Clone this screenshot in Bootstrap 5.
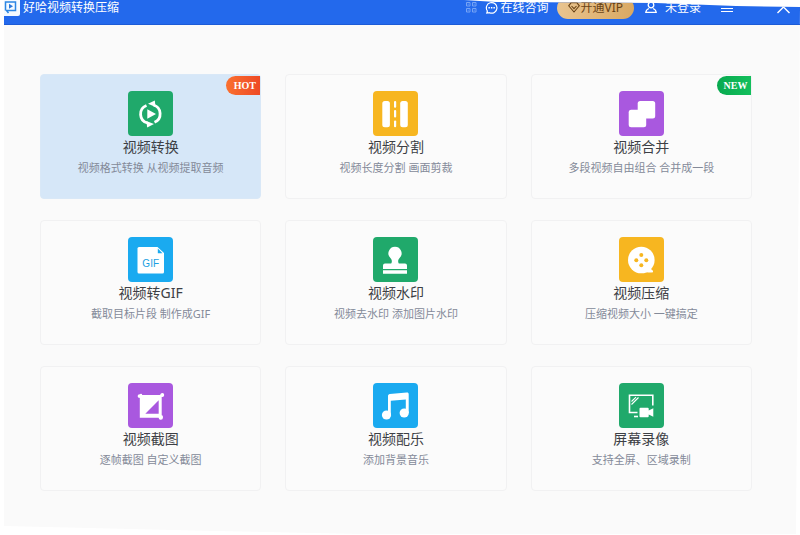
<!DOCTYPE html>
<html lang="zh-CN">
<head>
<meta charset="utf-8">
<meta name="viewport" content="width=device-width, initial-scale=1">
<title>好哈视频转换压缩</title>
<link href="https://cdn.jsdelivr.net/npm/bootstrap@5.3.0/dist/css/bootstrap.min.css" rel="stylesheet">
<style>
  body { font-family: "Noto Sans", "Noto Sans CJK SC", sans-serif; background: #fff; }
  /* The window has slightly uneven outer edges */
  .app-window {
    background: #fafafa;
    clip-path: polygon(4px 0, 58% 0, 62% 2px, 82% 3px, 92% 6px, 100% 7px, calc(100% - 4px) calc(100% - 1px), 45% calc(100% - 1px), 27% calc(100% - 4px), 4px calc(100% - 9px));
  }
  .title-bar { height: 25px; padding: 0 10px 9px 4px; background: #2369ec; border-bottom: 1px solid #1c5bd6; color: #fff; font-size: 12px; line-height: 16px; }
  .title-bar button { border: 0; padding: 0; background: none; color: inherit; line-height: 16px; font-size: 12px; white-space: nowrap; }
  .title-bar svg { flex: none; }
  .title-bar .vip-btn { height: 22px; padding: 0 11px; border-radius: 11px; background: linear-gradient(100deg, #e9c591, #d9a862); color: #6b4416; margin: 0 11px 0 9px; }
  .app-name { font-size: 12px; line-height: 16px; margin-left: 3px; }
  .chat-icon { margin-right: 2px; }
  .menu-btn { margin: 0 44px 0 20px; }
  .feature-area { padding: 49px 48px 40px 40px; }
  .feature-area .row { --bs-gutter-x: 24px; --bs-gutter-y: 21px; }
  .feature { min-height: 125px; padding: 16px 8px; border: 1px solid #f1f1f2; border-radius: 4px; background: #fbfbfb; }
  .feature.active { background: #d6e7f8; border-color: #d9e8f7; }
  .feature-title { font-size: 14px; line-height: 20px; color: #3d3f45; margin-top: 1px; }
  .feature-note { font-size: 11px; line-height: 16px; color: #848a99; margin-top: 3px; }
  .ribbon { top: 1px; right: 0; width: 34px; height: 19px; padding-left: 3px; border-radius: 10px 0 0 10px; font: bold 10px/20px "Liberation Serif", serif; color: #fff; }
  .ribbon-hot { background: linear-gradient(90deg, #fa7030, #ee4a25); }
  .ribbon-new { background: linear-gradient(90deg, #08a94f, #13bf5c); }
</style>
<script src="https://cdn.jsdelivr.net/npm/bootstrap@5.3.0/dist/js/bootstrap.bundle.min.js"></script>
</head>
<body>
<div class="app-window min-vh-100">
  <header class="title-bar d-flex align-items-center">
    <svg width="16" height="18" viewBox="0 0 16 18" aria-hidden="true"><path d="M0 0h16v15a2 2 0 0 1-2 2H0z" fill="#f4faff"/><path d="M1.500 9V3h7M4 3h7.500v8.500H4.500M1.500 7v4.500M4.500 14l-2-2.500h3M11.500 11.500H8" fill="none" stroke="#2b86e4" stroke-width="1.500"/><path d="M5 4.800v5l4-2.500z" fill="#2878dd"/></svg>
    <h1 class="app-name fw-normal mb-0">好哈视频转换压缩</h1>
    <div class="d-flex align-items-center ms-auto">
      <button type="button" class="d-flex me-2" aria-label="应用"><svg width="11" height="11" viewBox="0 0 11 11" fill="none" stroke="#77a4f5"><path d="M.5.500h3.500v3.500H.5zM6.500.500H10v3.500H6.500zM.5 6.500h3.500V10H.5zM6.500 6.500H10V10H6.500z"/><path d="M1.700 2.200h1M7.700 2.200h1M1.700 8.200h1M7.700 8.200h1"/></svg></button>
      <button type="button" class="d-flex align-items-center"><svg class="chat-icon" width="13" height="13" viewBox="0 0 13 13"><path d="M1.800 12l.6-2A5.300 5.300 0 1 1 4.500 11.700z" fill="none" stroke="#fff" stroke-width="1.200"/><path d="M3.400 6.700h1.500M5.900 6.700h1.500M8.400 6.700h1.500" stroke="#fff" stroke-width="1.500"/></svg>在线咨询</button>
      <button type="button" class="vip-btn d-flex align-items-center"><svg width="12" height="11" viewBox="0 0 12 11" fill="none" stroke="#6b4416" stroke-width="1.100"><path d="M3 .8h6l2.300 3L6 10 .7 3.800zM3.500 4L6 6.700 8.500 4"/></svg>开通VIP</button>
      <button type="button" class="d-flex align-items-center"><svg class="me-2" width="12" height="13" viewBox="0 0 12 13" fill="none" stroke="#fff" stroke-width="1.300"><circle cx="6" cy="4" r="2.800"/><path d="M4 7.500C2 8.300 1 9.500.8 11.300h10.400C11 9.500 10 8.300 8 7.500"/></svg>未登录</button>
      <button type="button" class="menu-btn d-flex" aria-label="菜单"><svg width="12" height="12" viewBox="0 0 12 12" stroke="#fff" stroke-width="1.200"><path d="M0 2.500h12M0 6.500h12M0 9.500h12"/></svg></button>
      <button type="button" class="d-flex" aria-label="关闭"><svg width="13" height="13" viewBox="0 0 13 13" stroke="#fff" stroke-width="1.400"><path d="M.5 0l12 12M12.500 0l-12 12"/></svg></button>
    </div>
  </header>

  <main class="feature-area">
    <div class="row row-cols-3">
      <div class="col"><a href="#" class="feature active card h-100 align-items-center text-center text-decoration-none">
        <span class="ribbon ribbon-hot position-absolute">HOT</span>
        <svg width="45" height="45" viewBox="0 0 45 45"><rect width="45" height="45" rx="4" fill="#20a96b"/><g fill="none" stroke="#fff" stroke-width="2.800"><path d="M18.500 14.500A9.200 9.200 0 0 0 19.500 32"/><path d="M26.500 31.300A9.200 9.200 0 0 0 25.500 14"/></g><path d="M19.300 18.300v9.400l8.700-4.700zM20 12.800l6.800-3.300.8 6.400zM26 33l-6.800 3.500-.9-6.400z" fill="#fff"/></svg>
        <span class="feature-title">视频转换</span><span class="feature-note">视频格式转换 从视频提取音频</span></a></div>

      <div class="col"><a href="#" class="feature card h-100 align-items-center text-center text-decoration-none">
        <svg width="45" height="45" viewBox="0 0 45 45"><rect width="45" height="45" rx="4" fill="#f7b620"/><g fill="#fff"><rect x="9.300" y="10" width="7.600" height="26.300" rx="2.500"/><rect x="27.200" y="10" width="7.600" height="26.300" rx="2.500"/><rect x="21" y="10" width="2.200" height="6.700" rx="1"/><rect x="21" y="19" width="2.200" height="7.500" rx="1"/><rect x="21" y="29.500" width="2.200" height="6.800" rx="1"/></g></svg>
        <span class="feature-title">视频分割</span><span class="feature-note">视频长度分割 画面剪裁</span></a></div>

      <div class="col"><a href="#" class="feature card h-100 align-items-center text-center text-decoration-none">
        <span class="ribbon ribbon-new position-absolute">NEW</span>
        <svg width="45" height="45" viewBox="0 0 45 45"><rect width="45" height="45" rx="4" fill="#a958df"/><g fill="#fff"><rect x="18.700" y="10" width="17.500" height="17.500" rx="2.500"/><rect x="9.700" y="18.800" width="17.500" height="17.500" rx="2.500"/></g></svg>
        <span class="feature-title">视频合并</span><span class="feature-note">多段视频自由组合 合并成一段</span></a></div>

      <div class="col"><a href="#" class="feature card h-100 align-items-center text-center text-decoration-none">
        <svg width="45" height="45" viewBox="0 0 45 45"><rect width="45" height="45" rx="4" fill="#1aaaf0"/><path d="M11 10h18.500l6.500 6v19a1.500 1.500 0 0 1-1.500 1.500H11A1.500 1.500 0 0 1 9.500 35V11.500A1.500 1.500 0 0 1 11 10z" fill="#fff"/><path d="M29.800 11.500v4.800h4.700z" fill="#1aaaf0"/><text x="22.700" y="29.500" text-anchor="middle" font-family="Liberation Sans, sans-serif" font-size="10" fill="#1a9fe2">GIF</text></svg>
        <span class="feature-title">视频转GIF</span><span class="feature-note">截取目标片段 制作成GIF</span></a></div>

      <div class="col"><a href="#" class="feature card h-100 align-items-center text-center text-decoration-none">
        <svg width="45" height="45" viewBox="0 0 45 45"><rect width="45" height="45" rx="4" fill="#20a96b"/><path d="M22 9.700a6.600 6.600 0 0 1 4.400 11.500c-1.600 1.600-1.500 3.800-.6 5.300H32a2 2 0 0 1 2 2V32H10v-3.500a2 2 0 0 1 2-2h6.200c.9-1.500 1-3.700-.6-5.300A6.600 6.600 0 0 1 22 9.700zM10 33.300h24v3.400H10z" fill="#fff"/></svg>
        <span class="feature-title">视频水印</span><span class="feature-note">视频去水印 添加图片水印</span></a></div>

      <div class="col"><a href="#" class="feature card h-100 align-items-center text-center text-decoration-none">
        <svg width="45" height="45" viewBox="0 0 45 45"><rect width="45" height="45" rx="4" fill="#f7b620"/><circle cx="22.300" cy="23" r="13.300" fill="#fff"/><path d="M32 30.500c0 1.500.5 2.500 2 3.200v1.600c-2.500.4-6.500.2-9-.3z" fill="#fff"/><g fill="#f7b620"><circle cx="22.300" cy="18" r="2"/><circle cx="17.300" cy="23.200" r="2"/><circle cx="27.300" cy="23.200" r="2"/><circle cx="22.300" cy="28.300" r="2"/></g></svg>
        <span class="feature-title">视频压缩</span><span class="feature-note">压缩视频大小 一键搞定</span></a></div>

      <div class="col"><a href="#" class="feature card h-100 align-items-center text-center text-decoration-none">
        <svg width="45" height="45" viewBox="0 0 45 45"><rect width="45" height="45" rx="4" fill="#a958df"/><path d="M13 13h19v20H13z" fill="#fff"/><path d="M30.700 17.300v13.400H17.300z" fill="#a958df"/><path d="M11 13.300h21.500L34.500 12M13 12v21.500h20.500M32.500 13v22" fill="none" stroke="#fff" stroke-width="2.400" stroke-linecap="round"/><g fill="#fff"><circle cx="11.500" cy="13" r="1.800"/><circle cx="34.300" cy="12" r="1.900"/><circle cx="32.800" cy="34.500" r="2.200"/></g></svg>
        <span class="feature-title">视频截图</span><span class="feature-note">逐帧截图 自定义截图</span></a></div>

      <div class="col"><a href="#" class="feature card h-100 align-items-center text-center text-decoration-none">
        <svg width="45" height="45" viewBox="0 0 45 45"><rect width="45" height="45" rx="4" fill="#1aaaf0"/><path d="M15 13.200c0-1.200.7-1.900 1.800-2.100l17-1.600c1.200-.1 1.900.5 1.900 1.700V30h-2.900V16.500l-15 1.300V32H15z" fill="#fff"/><circle cx="13.500" cy="32" r="4.600" fill="#fff"/><circle cx="31.200" cy="30" r="4.600" fill="#fff"/></svg>
        <span class="feature-title">视频配乐</span><span class="feature-note">添加背景音乐</span></a></div>

      <div class="col"><a href="#" class="feature card h-100 align-items-center text-center text-decoration-none">
        <svg width="45" height="45" viewBox="0 0 45 45"><rect width="45" height="45" rx="4" fill="#20a96b"/><path d="M18.500 29.500h-8V12.200h23.300v10.300" fill="none" stroke="#fff" stroke-width="1.600"/><path d="M12.500 18.500l4.500-4.300M12.500 21.500l7-7" stroke="#fff" stroke-width="1.100"/><path d="M15 33.500h4" stroke="#fff" stroke-width="1.600"/><path d="M21.500 24.700h7.200a1 1 0 0 1 1 1v1.800l4.600-2.200v8.400l-4.600-2.200v1.800a1 1 0 0 1-1 1h-7.200a1 1 0 0 1-1-1v-7.600a1 1 0 0 1 1-1z" fill="#fff"/></svg>
        <span class="feature-title">屏幕录像</span><span class="feature-note">支持全屏、区域录制</span></a></div>
    </div>
  </main>
</div>
</body>
</html>
